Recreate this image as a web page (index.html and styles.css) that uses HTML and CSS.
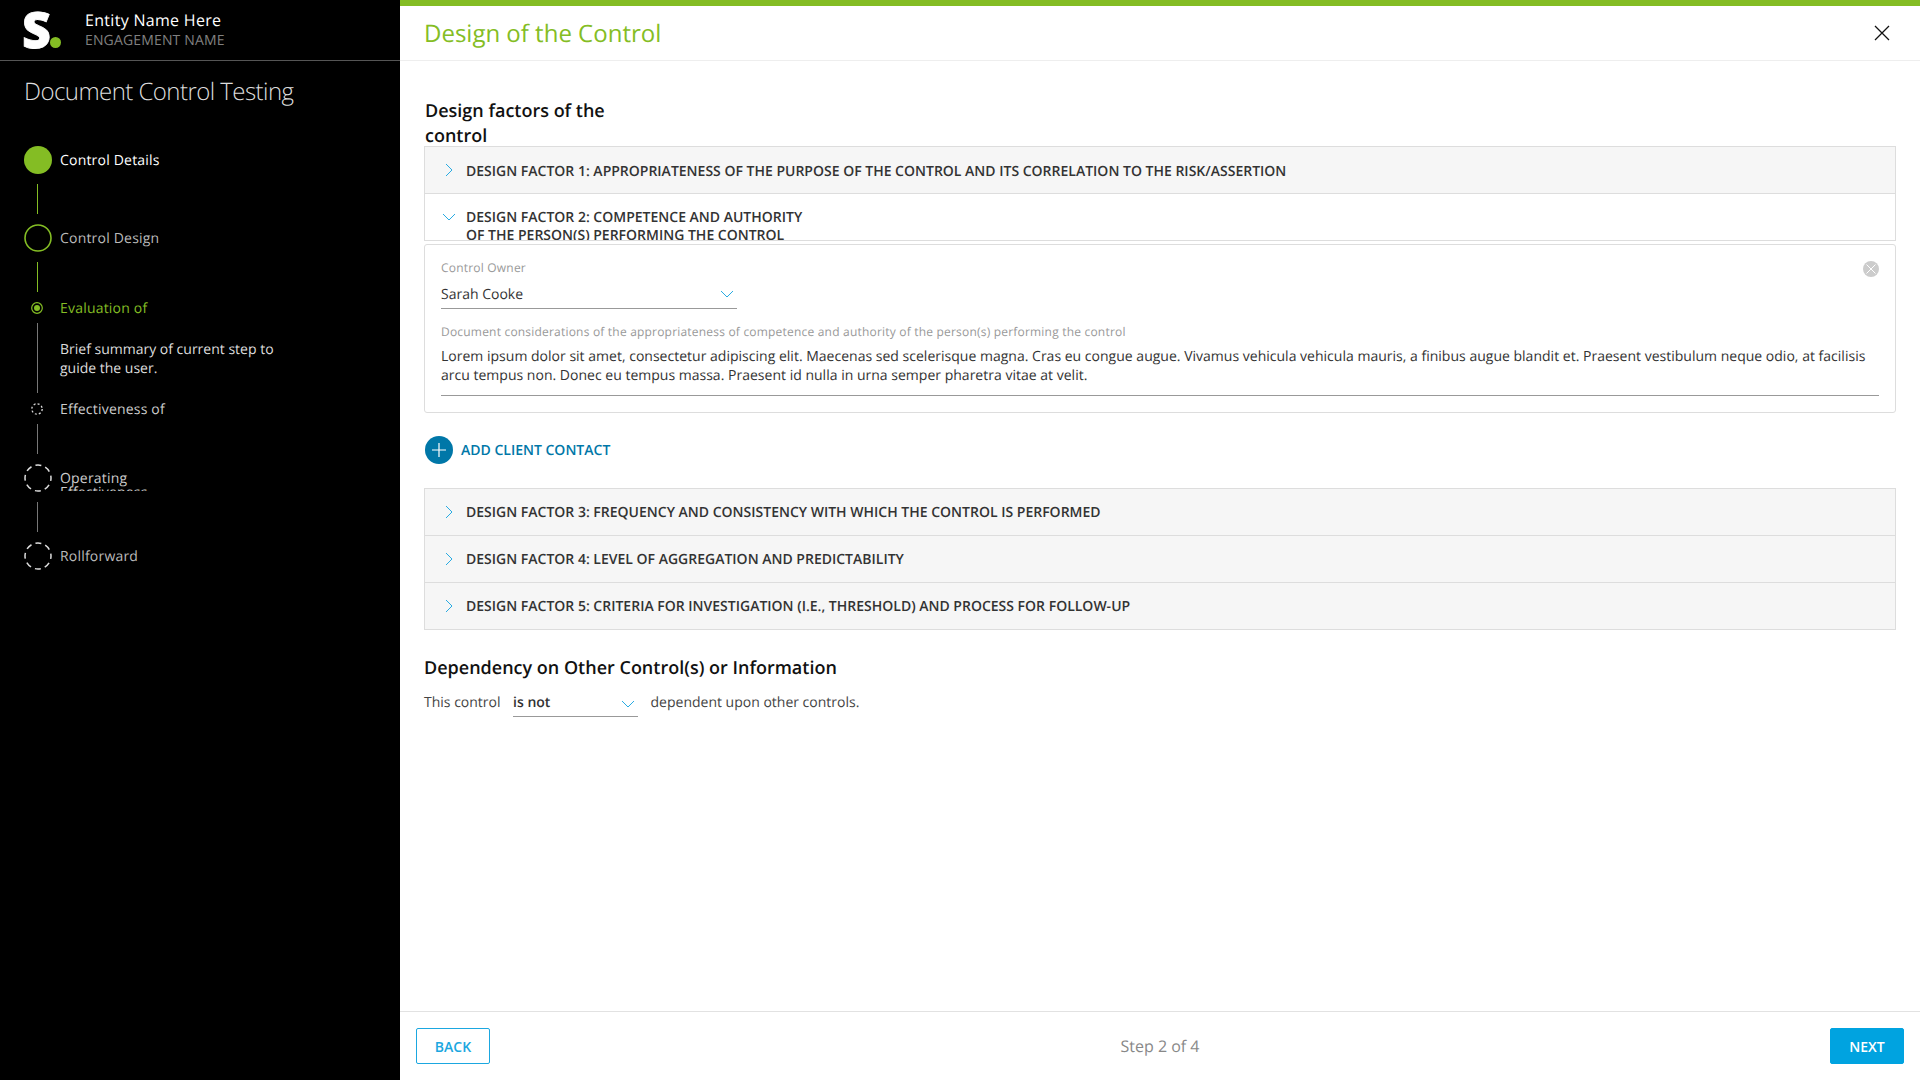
FILE: index.html
```html
<!DOCTYPE html>
<html lang="en">
<head>
<meta charset="utf-8">
<title>Design of the Control</title>
<link rel="stylesheet" href="styles.css">
</head>
<body>
<div class="app">
  <aside class="sidebar">
    <div class="brand">
      <div class="logo"><span class="logo-s">S</span><span class="logo-dot"></span></div>
      <div class="entity">
        <div class="entity-name">Entity Name Here</div>
        <div class="engagement">ENGAGEMENT NAME</div>
      </div>
    </div>
    <h1 class="doc-title">Document Control Testing</h1>
    <div class="steps">
      <div class="step">
        <div class="rail">
          <svg class="marker" viewBox="0 0 28 28"><circle cx="14" cy="14" r="14" fill="#84bd24"/></svg>
          <div class="line line-green"></div>
        </div>
        <div class="step-body"><div class="label label-done">Control Details</div></div>
      </div>
      <div class="step">
        <div class="rail">
          <svg class="marker" viewBox="0 0 28 28"><circle cx="14" cy="14" r="13" fill="none" stroke="#84bd24" stroke-width="1.6"/></svg>
          <div class="line line-green"></div>
        </div>
        <div class="step-body"><div class="label">Control Design</div></div>
      </div>
      <div class="step">
        <div class="rail">
          <svg class="marker-small" viewBox="0 0 12 12"><circle cx="6" cy="6" r="5.3" fill="none" stroke="#84bd24" stroke-width="1.2"/><circle cx="6" cy="6" r="3" fill="#84bd24"/></svg>
          <div class="line line-grey line-long"></div>
        </div>
        <div class="step-body">
          <div class="label-small label-active">Evaluation of</div>
          <p class="summary">Brief summary of current step to guide the user.</p>
        </div>
      </div>
      <div class="step">
        <div class="rail">
          <svg class="marker-small" viewBox="0 0 12 12"><circle cx="6" cy="6" r="5.2" fill="none" stroke="#ddd" stroke-width="1.3" stroke-dasharray="2 2.08"/></svg>
          <div class="line line-grey line-after-small"></div>
        </div>
        <div class="step-body"><div class="label-small">Effectiveness of</div></div>
      </div>
      <div class="step">
        <div class="rail">
          <svg class="marker" viewBox="0 0 28 28"><circle cx="14" cy="14" r="13" fill="none" stroke="#ddd" stroke-width="1.5" stroke-dasharray="6 4.21" stroke-dashoffset="3"/></svg>
          <div class="line line-grey"></div>
        </div>
        <div class="step-body"><div class="label-clipped">Operating Effectiveness</div></div>
      </div>
      <div class="step">
        <div class="rail">
          <svg class="marker" viewBox="0 0 28 28"><circle cx="14" cy="14" r="13" fill="none" stroke="#ddd" stroke-width="1.5" stroke-dasharray="6 4.21" stroke-dashoffset="3"/></svg>
        </div>
        <div class="step-body"><div class="label">Rollforward</div></div>
      </div>
    </div>
  </aside>

  <main class="main">
    <div class="topbar"></div>
    <header class="main-header">
      <h2 class="main-title">Design of the Control</h2>
      <svg class="close-icon" viewBox="0 0 16 16"><path d="M1 1L15 15M15 1L1 15" fill="none" stroke="#111" stroke-width="1.3"/></svg>
    </header>

    <div class="content">
      <h3 class="section-heading narrow">Design factors of the control</h3>

      <div class="accordion">
        <div class="acc-row acc-first">
          <svg class="chev-right" viewBox="0 0 10 14"><path d="M2 1L8 7L2 13" fill="none" stroke="#29abe2" stroke-width="1"/></svg>
          <div class="acc-text">DESIGN FACTOR 1: APPROPRIATENESS OF THE PURPOSE OF THE CONTROL AND ITS CORRELATION TO THE RISK/ASSERTION</div>
        </div>
        <div class="acc-row acc-open">
          <svg class="chev-down" viewBox="0 0 14 10"><path d="M1 2L7 8L13 2" fill="none" stroke="#29abe2" stroke-width="1"/></svg>
          <div class="acc-text acc-text-narrow">DESIGN FACTOR 2: COMPETENCE AND AUTHORITY OF THE PERSON(S) PERFORMING THE CONTROL</div>
        </div>
      </div>

      <section class="panel">
        <svg class="clear-icon" viewBox="0 0 16 16"><circle cx="8" cy="8" r="8" fill="#ccc"/><path d="M3.5 3.5L12.5 12.5M12.5 3.5L3.5 12.5" stroke="#fff" stroke-width="1"/></svg>
        <div class="field-label">Control Owner</div>
        <div class="select select-owner">
          <span>Sarah Cooke</span>
          <svg class="chev-select" viewBox="0 0 14 10"><path d="M1 2L7 8L13 2" fill="none" stroke="#29abe2" stroke-width="1"/></svg>
        </div>
        <div class="field-label field-label-doc">Document considerations of the appropriateness of competence and authority of the person(s) performing the control</div>
        <p class="field-text">Lorem ipsum dolor sit amet, consectetur adipiscing elit. Maecenas sed scelerisque magna. Cras eu congue augue. Vivamus vehicula vehicula mauris, a finibus augue blandit et. Praesent vestibulum neque odio, at facilisis arcu tempus non. Donec eu tempus massa. Praesent id nulla in urna semper pharetra vitae at velit.</p>
      </section>

      <div class="add-contact">
        <svg class="add-icon" viewBox="0 0 28 28"><circle cx="14" cy="14" r="14" fill="#0077a8"/><path d="M14 7V21M7 14H21" stroke="#fff" stroke-width="1.2"/></svg>
        <span class="add-text">ADD CLIENT CONTACT</span>
      </div>

      <div class="accordion">
        <div class="acc-row">
          <svg class="chev-right" viewBox="0 0 10 14"><path d="M2 1L8 7L2 13" fill="none" stroke="#29abe2" stroke-width="1"/></svg>
          <div class="acc-text">DESIGN FACTOR 3: FREQUENCY AND CONSISTENCY WITH WHICH THE CONTROL IS PERFORMED</div>
        </div>
        <div class="acc-row">
          <svg class="chev-right" viewBox="0 0 10 14"><path d="M2 1L8 7L2 13" fill="none" stroke="#29abe2" stroke-width="1"/></svg>
          <div class="acc-text">DESIGN FACTOR 4: LEVEL OF AGGREGATION AND PREDICTABILITY</div>
        </div>
        <div class="acc-row acc-last">
          <svg class="chev-right" viewBox="0 0 10 14"><path d="M2 1L8 7L2 13" fill="none" stroke="#29abe2" stroke-width="1"/></svg>
          <div class="acc-text">DESIGN FACTOR 5: CRITERIA FOR INVESTIGATION (I.E., THRESHOLD) AND PROCESS FOR FOLLOW-UP</div>
        </div>
      </div>

      <h3 class="section-heading dependency">Dependency on Other Control(s) or Information</h3>
      <div class="dependency-row">
        <span>This control</span>
        <div class="select select-inline">
          <span class="select-strong">is not</span>
          <svg class="chev-select" viewBox="0 0 14 10"><path d="M1 2L7 8L13 2" fill="none" stroke="#29abe2" stroke-width="1"/></svg>
        </div>
        <span>dependent upon other controls.</span>
      </div>
    </div>

    <footer class="footer">
      <button class="btn btn-back" type="button">BACK</button>
      <div class="step-count">Step 2 of 4</div>
      <button class="btn btn-next" type="button">NEXT</button>
    </footer>
  </main>
</div>
</body>
</html>
```

FILE: styles.css
```css
* { box-sizing: border-box; }
html, body { margin: 0; height: 100%; }
body { font-family: "Open Sans", "Liberation Sans", sans-serif; color: #333; background: #fff; text-rendering: geometricPrecision; }
h1, h2, h3, p { margin: 0; }

.app { display: flex; height: 1080px; overflow: hidden; }

/* Sidebar */
.sidebar { width: 400px; flex: none; background: #000; color: #ddd; }
.brand { display: flex; height: 61px; padding-left: 24px; border-bottom: 1px solid #555; }
.logo { width: 61px; height: 60px; display: flex; align-items: flex-start; position: relative; }
.logo-s { font-size: 50px; font-weight: 800; line-height: 58px; color: #fff; margin-left: -2px; -webkit-text-stroke: 0.8px #fff; }
.logo-dot { position: absolute; left: 26px; top: 37px; width: 11px; height: 11px; border-radius: 50%; background: #84bd24; }
.entity { padding-top: 10px; }
.entity-name { font-size: 16px; line-height: 20px; font-weight: 500; color: #fff; letter-spacing: 0.3px; }
.engagement { font-size: 14px; line-height: 20px; color: #808080; letter-spacing: 0.15px; padding-top: 1px; }
.doc-title { font-size: 24px; line-height: 32px; font-weight: 300; color: #ddd; margin: 15px 0 38px 24px; letter-spacing: -0.55px; }

.steps { padding-left: 24px; }
.step { display: flex; gap: 8px; }
.rail { width: 28px; flex: none; display: flex; flex-direction: column; align-items: center; }
.marker { width: 28px; height: 28px; display: block; flex: none; }
.marker-small { width: 12px; height: 12px; display: block; flex: none; margin-right: 2px; }
.line { width: 1px; height: 30px; margin: 10px 1px 10px 0; flex: none; }
.line-green { background: #84bd24; }
.line-grey { background: #777; }
.line-long { height: 70px; margin-top: 9px; }
.line-after-small { margin-top: 9px; }
.step-body { width: 240px; }
.label { font-size: 14px; line-height: 28px; padding-top: 1px; color: #bbb; letter-spacing: 0.2px; }
.label-done { color: #fff; font-weight: 500; }
.label-small { font-size: 14px; line-height: 12px; padding-top: 1px; color: #ccc; letter-spacing: 0.2px; }
.label-active { color: #84bd24; font-weight: 500; }
.summary { font-size: 14px; line-height: 19px; color: #ddd; margin-top: 25px; width: 230px; }
.label-clipped { font-size: 14px; line-height: 14px; color: #ccc; margin-top: 8px; height: 19px; width: 100px; overflow: hidden; letter-spacing: 0.2px; }

/* Main */
.main { flex: 1; display: flex; flex-direction: column; min-width: 0; }
.topbar { height: 6px; background: #84bd24; flex: none; }
.main-header { height: 55px; flex: none; display: flex; align-items: center; justify-content: space-between; padding: 1px 30px 0 24px; border-bottom: 1px solid #eee; }
.main-title { font-size: 24px; font-weight: 400; line-height: 32px; color: #84bd24; }
.close-icon { width: 16px; height: 16px; display: block; margin-bottom: 1px; }

.content { flex: 1; padding: 38px 24px 0; min-height: 0; }
.section-heading { font-size: 18px; line-height: 25px; font-weight: 600; color: #111; }
.narrow { width: 210px; padding-left: 1px; margin-bottom: -3px; }

.accordion { display: flex; flex-direction: column; }
.acc-row { height: 48px; display: flex; align-items: flex-start; padding: 15px 0 0 0; border: 1px solid #ddd; border-bottom-color: #bbb; background: #f6f6f6; margin-top: -1px; overflow: hidden; }
.accordion > .acc-row:first-child { margin-top: 0; }
.acc-first { padding-top: 16px; }
.acc-first .chev-right { margin-top: 0; }
.acc-open { background: #fff; border-bottom-color: #ddd; }
.acc-last { border-bottom-color: #ddd; }
.acc-text { font-size: 14px; line-height: 18px; font-weight: 600; color: #333; }
.acc-text-narrow { width: 350px; }
.chev-right { width: 10px; height: 14px; flex: none; margin: 1px 12px 0 19px; display: block; }
.chev-down { width: 14px; height: 10px; flex: none; margin: 3px 10px 0 17px; display: block; }

.panel { position: relative; height: 169px; margin-top: 3px; padding: 14px 16px 0; border: 1px solid #ddd; border-radius: 3px; }
.clear-icon { position: absolute; right: 16px; top: 16px; width: 16px; height: 16px; }
.field-label { font-size: 12px; line-height: 18px; color: #999; letter-spacing: 0.2px; }
.field-label-doc { margin-top: 14px; }
.select { display: flex; align-items: center; justify-content: space-between; border-bottom: 1px solid #999; }
.select-owner { width: 296px; height: 31px; padding: 3px 3px 0 0; font-size: 14px; color: #333; margin-top: 1px; }
.select-owner .chev-select { margin-bottom: 2px; }
.chev-select { width: 14px; height: 10px; display: block; }
.field-text { font-size: 14px; line-height: 19px; color: #333; margin-top: 6px; padding-bottom: 10px; border-bottom: 1px solid #999; letter-spacing: 0.012px; }

.add-contact { display: flex; align-items: center; gap: 8px; height: 28px; margin: 23px 0 24px 1px; font-size: 14px; font-weight: 600; color: #0077a8; }
.add-icon { width: 28px; height: 28px; display: block; }
.add-text { line-height: 20px; margin-top: 1px; }

.dependency { margin-top: 26px; }
.dependency-row { display: flex; align-items: flex-start; gap: 12.5px; font-size: 14px; line-height: 20px; color: #444; margin-top: 12px; }
.select-inline { width: 125px; height: 24px; padding: 0 3px 2px 0; align-items: flex-start; }
.select-strong { font-weight: 600; color: #333; }
.select-inline .chev-select { margin-top: 6px; }

/* Footer */
.footer { height: 69px; flex: none; display: flex; align-items: center; justify-content: space-between; padding: 0 16px; border-top: 1px solid #e2e2e2; }
.btn { width: 74px; height: 36px; border-radius: 2px; font-family: inherit; font-size: 14px; font-weight: 600; padding: 0; }
.btn-back { background: #fff; border: 1px solid #1ba7e0; color: #1ba7e0; }
.btn-next { background: #00a3e0; border: 1px solid #00a3e0; color: #fff; }
.step-count { font-size: 16px; color: #888; }
```
